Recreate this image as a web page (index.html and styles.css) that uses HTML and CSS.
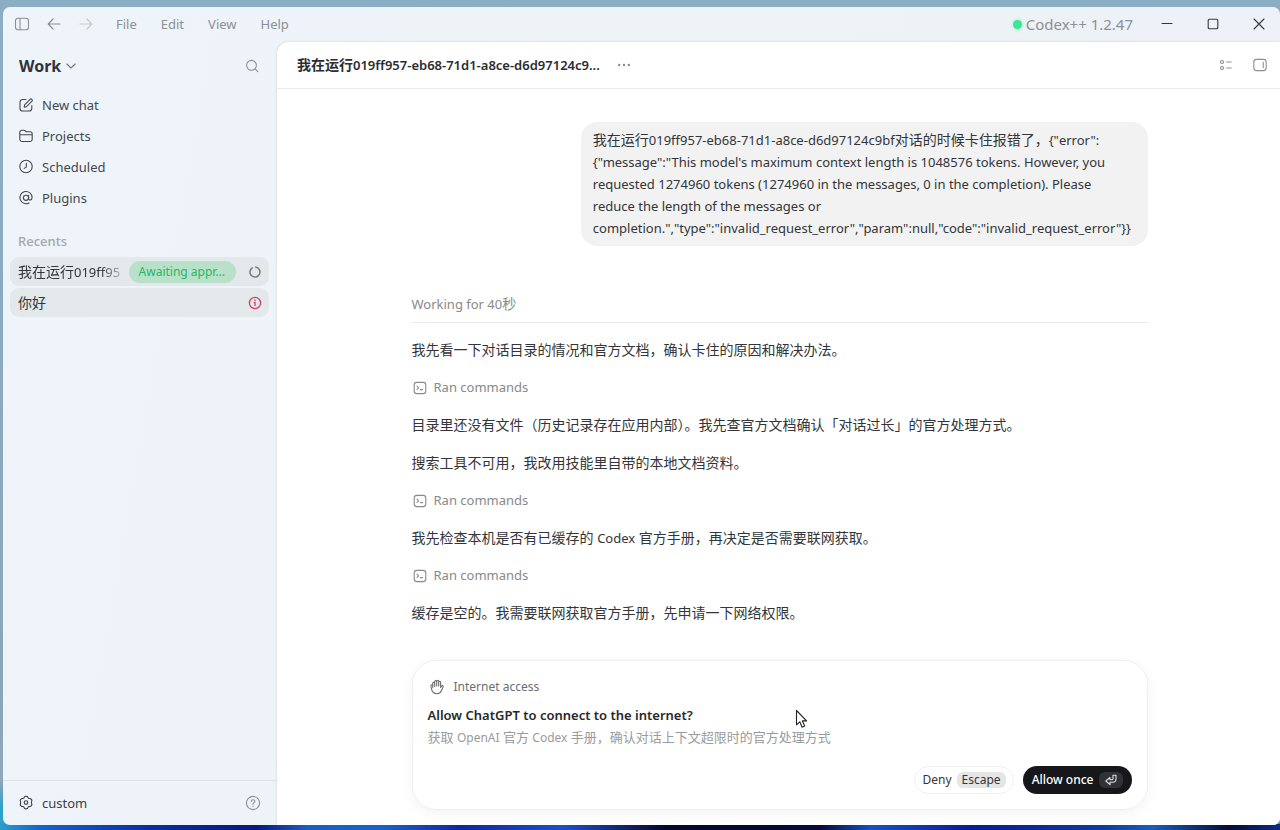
FILE: index.html
```html
<!DOCTYPE html>
<html lang="zh-CN">
<head>
<meta charset="utf-8">
<meta name="viewport" content="width=device-width, initial-scale=1">
<title>Codex++</title>
<link rel="stylesheet" href="styles.css">
</head>
<body>
<svg class="sprite" aria-hidden="true">
  <symbol id="terminal" viewBox="0 0 14 14"><rect x="1.2" y="1.4" width="11.6" height="11.2" rx="2.6"/><path d="M4 5.200 5.600 6.800 4 8.400M7.400 8.600h2.200"/></symbol>
</svg>
<div class="window">
  <header class="titlebar">
    <nav class="menu" aria-label="Application">
      <button class="icon-btn" aria-label="Toggle sidebar"><svg width="16" height="14" viewBox="0 0 16 14"><rect x="1.5" y="1.2" width="13" height="11.6" rx="2.6"/><path d="M6 1.2v11.6"/></svg></button>
      <button class="icon-btn" aria-label="Back"><svg width="16" height="14" viewBox="0 0 16 14"><path d="M14 7H2.5M7 2 2.2 7 7 12"/></svg></button>
      <button class="icon-btn faint" aria-label="Forward"><svg width="16" height="14" viewBox="0 0 16 14"><path d="M2 7h11.5M9 2l4.8 5L9 12"/></svg></button>
      <button class="menu-item">File</button>
      <button class="menu-item">Edit</button>
      <button class="menu-item">View</button>
      <button class="menu-item">Help</button>
    </nav>
    <div class="status"><span class="dot"></span>Codex++ 1.2.47</div>
    <div class="controls">
      <button class="icon-btn" aria-label="Minimize"><svg width="14" height="14" viewBox="0 0 14 14"><path d="M2 6.5h10"/></svg></button>
      <button class="icon-btn" aria-label="Maximize"><svg width="14" height="14" viewBox="0 0 14 14"><rect x="2.2" y="2.2" width="9.6" height="9.6" rx="1"/></svg></button>
      <button class="icon-btn" aria-label="Close"><svg width="14" height="14" viewBox="0 0 14 14"><path d="m2 2 10 10M12 2 2 12"/></svg></button>
    </div>
  </header>

  <aside class="sidebar">
    <div class="side-head">
      <button class="workspace">Work<svg width="12" height="12" viewBox="0 0 12 12"><path d="m1.8 4 4.2 4 4.2-4"/></svg></button>
      <button class="icon-btn" aria-label="Search"><svg width="14" height="14" viewBox="0 0 14 14"><circle cx="6.5" cy="6.3" r="4.9"/><path d="m10.1 9.9 2.7 2.8"/></svg></button>
    </div>
    <nav class="side-nav" aria-label="Main">
      <a href="#new"><svg width="16" height="16" viewBox="0 0 16 16"><path d="M8 2.5H4.6a2.6 2.6 0 0 0-2.6 2.6v6.3A2.6 2.6 0 0 0 4.6 14h6.6a2.6 2.6 0 0 0 2.6-2.6V8.6"/><path d="M6.2 10.2 6.6 7.8l5.5-5.5a1.35 1.35 0 0 1 1.9 1.9L8.5 9.7Z"/></svg>New chat</a>
      <a href="#projects"><svg width="16" height="16" viewBox="0 0 16 16"><path d="M1.8 11.2V4.3a2 2 0 0 1 2-2h2.1c1.5 0 1.5 1.4 3 1.4h3.3a2 2 0 0 1 2 2v5.5a2.3 2.3 0 0 1-2.3 2.3H4.1a2.3 2.3 0 0 1-2.3-2.3ZM1.8 6.8h12.4"/></svg>Projects</a>
      <a href="#scheduled"><svg width="16" height="16" viewBox="0 0 16 16"><circle cx="8" cy="7.5" r="6.2"/><path d="M8.3 4.2v3.9L6.2 9.4"/></svg>Scheduled</a>
      <a href="#plugins"><svg width="16" height="16" viewBox="0 0 16 16"><circle cx="8" cy="7.8" r="2.6"/><path d="M10.6 5.2v3.3c0 2.3 3.5 2 3.5-.9A6.1 6.1 0 1 0 11 12.9"/></svg>Plugins</a>
    </nav>
    <h2 class="recents-title">Recents</h2>
    <nav class="recents" aria-label="Recents">
      <a href="#c1"><span class="name fade">我在运行<span class="lat">019ff95</span></span><span class="badge">Awaiting appr...</span><svg class="spinner" width="14" height="14" viewBox="0 0 14 14"><path d="M4.3 2.8a5 5 0 1 0 3.4-.7"/></svg></a>
      <a href="#c2"><span class="name">你好</span><svg class="alert" width="14" height="14" viewBox="0 0 14 14"><circle cx="7" cy="7" r="5.6"/><path d="M6.2 6.5H7v3M7 4v.6"/></svg></a>
    </nav>
    <footer class="account">
      <button class="profile"><svg width="16" height="16" viewBox="0 0 16 16"><path d="M6.5 1.8 8 1.2l1.6.6.8 1.5 2.2.4 1.3 1.5-.5 2.3.5 2.4-1.3 1.5-2.2.4-.8 1.5-1.6.6-1.5-.6-.8-1.5-2.2-.4-1.3-1.5.5-2.4-.5-2.3 1.3-1.5 2.2-.4Z"/><circle cx="8" cy="7.6" r="1.8"/></svg>custom</button>
      <button class="icon-btn" aria-label="Help center"><svg width="16" height="16" viewBox="0 0 16 16"><circle cx="8" cy="8" r="6.6"/><path d="M6.300 6.500c0-2.300 3.500-2.200 3.500-.1C9.800 7.700 8 7.700 8 9.200M8 11v.4"/></svg></button>
    </footer>
  </aside>

  <main class="main">
    <header class="chat-head">
      <h1>我在运行<span class="lat">019ff957-eb68-71d1-a8ce-d6d97124c9...</span></h1>
      <button class="icon-btn" aria-label="More"><svg width="14" height="14" viewBox="0 0 14 14"><g class="solid"><circle cx="2.200" cy="7" r="1.200"/><circle cx="7" cy="7" r="1.200"/><circle cx="11.800" cy="7" r="1.200"/></g></svg></button>
      <div class="head-tools">
        <button class="icon-btn" aria-label="Summary"><svg width="14" height="14" viewBox="0 0 14 14"><circle cx="3" cy="4" r="1.500"/><circle cx="3" cy="10" r="1.500"/><path d="M7.600 4h4.600M7.600 10h4.600"/></svg></button>
        <button class="icon-btn" aria-label="Toggle panel"><svg width="14" height="14" viewBox="0 0 14 14"><rect x=".8" y="1.400" width="12.400" height="11.200" rx="2.800"/><path d="M10.200 4.400v5.200"/></svg></button>
      </div>
    </header>
    <div class="column">
      <div class="bubble">我在运行<span class="lat">019ff957-eb68-71d1-a8ce-d6d97124c9bf</span>对话的时候卡住报错了，<span class="lat">{"error":<br>{"message":"This model's maximum context length is 1048576 tokens. However, you requested 1274960 tokens (1274960 in the messages, 0 in the completion). Please reduce the length of the messages or completion.","type":"invalid_request_error","param":null,"code":"invalid_request_error"}}</span></div>
      <div class="elapsed">Working for 40<span class="cjk">秒</span></div>
      <div class="steps">
        <p>我先看一下对话目录的情况和官方文档，确认卡住的原因和解决办法。</p>
        <button class="ran"><svg width="14" height="14"><use href="#terminal"/></svg>Ran commands</button>
        <p>目录里还没有文件（历史记录存在应用内部）。我先查官方文档确认「对话过长」的官方处理方式。</p>
        <p>搜索工具不可用，我改用技能里自带的本地文档资料。</p>
        <button class="ran"><svg width="14" height="14"><use href="#terminal"/></svg>Ran commands</button>
        <p>我先检查本机是否有已缓存的 <span class="lat">Codex</span> 官方手册，再决定是否需要联网获取。</p>
        <button class="ran"><svg width="14" height="14"><use href="#terminal"/></svg>Ran commands</button>
        <p>缓存是空的。我需要联网获取官方手册，先申请一下网络权限。</p>
      </div>
      <section class="card">
        <div class="card-kind"><svg width="16" height="16" viewBox="0 0 16 16"><path d="M3.800 8.600V4.300c0-1.400 1.900-1.400 1.900 0V7.500M5.700 7V2.700c0-1.400 2-1.400 2 0V7M7.700 6.500V2.200c0-1.300 2-1.300 2 0V7M9.700 7V3.200c0-1.300 1.900-1.300 1.900 0v5.200l.8-1.300c.8-1 2.200-.2 1.700.9l-1.700 3.800c-.9 1.900-2.300 2.900-4.400 2.900-2.900 0-5-1.900-5.400-4.600L1.900 7c-.2-1.300 1.600-1.500 1.900-.3"/></svg>Internet access</div>
        <h2>Allow ChatGPT to connect to the internet?</h2>
        <p>获取 <span class="small">OpenAI</span> 官方 <span class="small">Codex</span> 手册，确认对话上下文超限时的官方处理方式</p>
        <div class="actions">
          <button class="deny">Deny<kbd>Escape</kbd></button>
          <button class="allow">Allow once<kbd><svg width="14" height="12" viewBox="0 0 14 12"><path d="M9 1.200h3v3.600c0 2-1.200 3.400-3.300 3.400H6v2.500L1.800 7 6 3.500v2.300h1.700c.9 0 1.300-.5 1.300-1.300Z"/></svg></kbd></button>
        </div>
      </section>
    </div>
  </main>
</div>
<svg class="cursor" width="13" height="20" viewBox="0 0 13 20" aria-hidden="true"><path d="M1.500 1.500v14.300l3.300-3 2.300 5.400 2.600-1.200-2.300-5.100h4.200Z"/></svg>
</body>
</html>
```
FILE: styles.css
```css
* { box-sizing: border-box; }

body {
  margin: 0;
  min-height: 100vh;
  display: flex;
  padding: 7px 0 5px 3px;
  font: 13px/22px "Noto Sans", "Noto Sans CJK SC", sans-serif;
  color: #333538;
  background:
    linear-gradient(90deg, #2f9cc8, #1467c4 3%, #0a2c9c 12%, #071a78 20%, #1a5fc0 24%, #1762c8 30%, #0c2a9a 36%, #1c50c8 44%, #04082a 52%, #050a38 64%, #1452c0 68%, #0a1c90 76%, #0c3c98 86%, #1660b8 90%, #060c38 96%, #0a2c80) bottom / 100% 6px no-repeat,
    linear-gradient(#8baec4, #8aa6ba 85%, #90a8b8 94%, #2fa0cc 97%);
}

button, a, kbd { font: inherit; color: inherit; text-decoration: none; }
button { border: 0; padding: 0; background: none; }
h1, h2, p { margin: 0; }

svg {
  flex: none;
  fill: none;
  stroke: currentColor;
  stroke-width: 1.1;
  stroke-linecap: round;
  stroke-linejoin: round;
}
.solid { fill: currentColor; stroke: none; }
.sprite { position: absolute; width: 0; height: 0; }
.icon-btn { display: flex; }
.lat { font-size: 13px; }
.cjk { font-size: 14px; }
.small { font-size: 12px; }

.window {
  flex: 1;
  display: grid;
  grid-template: 35px 1fr / 274px minmax(0, 1fr);
  border-radius: 7px;
  overflow: hidden;
  background: linear-gradient(100deg, #eef4f9, #edf3f7 50%, #eef1f8);
}

.titlebar {
  grid-column: 1 / -1;
  display: flex;
  align-items: center;
  padding: 0 14px 1px 11px;
  color: #8b9095;
}
.menu { display: flex; align-items: center; gap: 16px; flex: 1; }
.menu-item { margin-left: 6px; }
.menu-item + .menu-item { margin-left: 8px; }
.menu .faint { color: #c5cace; }
.status { display: flex; align-items: center; gap: 4px; font-size: 15px; }
.dot { width: 9px; height: 9px; border-radius: 50%; background: #3fe596; box-shadow: 0 0 4px #8df0c0; }
.controls { display: flex; gap: 32px; margin-left: 27px; color: #34383c; }

.sidebar { display: flex; flex-direction: column; }
.side-head {
  display: flex;
  align-items: center;
  justify-content: space-between;
  padding: 12px 18px 0 16px;
  color: #8b9095;
}
.workspace {
  display: flex;
  align-items: center;
  gap: 4px;
  font-size: 16px;
  line-height: 24px;
  font-weight: 700;
  color: #303338;
}
.workspace svg { color: #75797e; }
.side-nav { display: flex; flex-direction: column; padding: 11px 15px 0; color: #44484c; }
.side-nav a { display: flex; align-items: center; gap: 8px; height: 31px; }
.recents-title { padding: 17px 15px 5px; font-size: 13px; font-weight: 500; color: #a3a8ac; }
.recents { display: flex; flex-direction: column; gap: 2px; padding: 0 8px 0 7px; }
.recents a {
  display: flex;
  align-items: center;
  height: 29px;
  padding: 0 7px 0 8px;
  border-radius: 9px;
  background: #e3e8ea;
}
.name { flex: 1; white-space: nowrap; font-size: 14px; }
.fade {
  -webkit-mask: linear-gradient(90deg, #000 80%, #0004);
  mask: linear-gradient(90deg, #000 80%, #0004);
}
.badge {
  margin: 0 12px 0 8px;
  padding: 0 11px 0 10px;
  border-radius: 11px;
  background: #b9e1ca;
  color: #27b664;
  font-size: 12px;
}
.spinner { color: #777c80; stroke-width: 1.5; }
.alert { color: #cf3f64; stroke-width: 1.3; }
.account {
  display: flex;
  align-items: center;
  justify-content: space-between;
  margin-top: auto;
  height: 45px;
  padding: 0 16px 0 15px;
  border-top: 1px solid #dfe3e8;
  color: #8b9095;
}
.profile { display: flex; align-items: center; gap: 8px; color: #3c4043; }

.main {
  display: flex;
  flex-direction: column;
  border-radius: 12px 0 0 0;
  background: #fff;
  box-shadow: 0 0 3px #cdd4da;
}
.chat-head {
  display: flex;
  align-items: center;
  height: 47px;
  padding: 0 13px 0 20px;
  gap: 17px;
  border-bottom: 1px solid #ececec;
  color: #8b8e91;
}
.chat-head h1 { font-size: 14px; font-weight: 600; color: #2b2d30; white-space: nowrap; }
.head-tools { display: flex; gap: 20px; margin-left: auto; }

.column {
  flex: 1;
  display: flex;
  flex-direction: column;
  width: 100%;
  max-width: 738px;
  margin: 0 auto;
  padding: 33px 0 15px 2px;
  font-size: 14px;
}
.bubble {
  align-self: flex-end;
  max-width: 77%;
  padding: 7px 12px;
  border-radius: 16px;
  background: #f2f2f2;
}
.elapsed {
  margin-top: 47px;
  padding-bottom: 7px;
  border-bottom: 1px solid #ececec;
  font-size: 13px;
  color: #88898b;
}
.steps { display: flex; flex-direction: column; gap: 16px; margin: 16px 0 36px; }
.ran {
  display: flex;
  align-items: center;
  gap: 7px;
  padding-left: 1px;
  font-size: 13px;
  line-height: 21px;
  color: #88898b;
}

.card {
  display: flex;
  flex-direction: column;
  margin-top: auto;
  min-height: 150px;
  padding: 15px;
  border: 1px solid #efefef;
  border-radius: 24px;
  box-shadow: 0 3px 14px #0000000d;
}
.card-kind { display: flex; align-items: center; gap: 9px; padding-left: 1px; font-size: 12px; color: #6c6e70; }
.card h2 { margin-top: 6px; font-size: 13px; font-weight: 600; color: #27292b; }
.card p { font-size: 13px; color: #999b9d; }
.actions { display: flex; justify-content: flex-end; gap: 9px; margin-top: auto; font-size: 12px; }
.actions button { display: flex; align-items: center; gap: 5px; height: 28px; padding: 0 7px; border-radius: 14px; }
.deny { border: 1px solid #f0f0f0; }
.actions kbd { display: flex; align-items: center; height: 16px; padding: 0 5px; border-radius: 6px; background: #e6e6e6; }
.actions .allow { padding: 0 9px; background: #15171a; color: #fff; font-weight: 500; }
.allow kbd { background: #303236; color: #ddd; }

.cursor { position: absolute; left: 795px; top: 709px; fill: #fff; stroke: #222; }
```
